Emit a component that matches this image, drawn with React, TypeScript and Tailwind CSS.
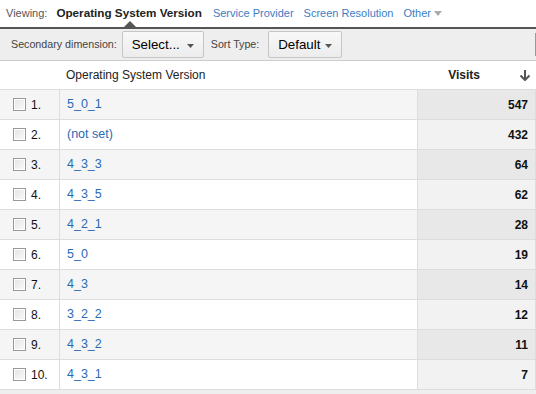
import React from "react";

const rows = [
    { n: 1, name: "5_0_1", visits: 547 },
    { n: 2, name: "(not set)", visits: 432 },
    { n: 3, name: "4_3_3", visits: 64 },
    { n: 4, name: "4_3_5", visits: 62 },
    { n: 5, name: "4_2_1", visits: 28 },
    { n: 6, name: "5_0", visits: 19 },
    { n: 7, name: "4_3", visits: 14 },
    { n: 8, name: "3_2_2", visits: 12 },
    { n: 9, name: "4_3_2", visits: 11 },
    { n: 10, name: "4_3_1", visits: 7 },
];

const Caret = () => (
    <svg width="7" height="4" viewBox="0 0 7 4" className="absolute right-[9px] top-[12px]">
        <path d="M0 0h7L3.5 4z" fill="#555" />
    </svg>
);

const App = () => {
    return (
        <div className="w-[536px] h-[394px] overflow-hidden bg-white font-['Liberation_Sans',Arial,sans-serif]">
            {/* Viewing tabs */}
            <div className="relative h-[27px] flex items-center pl-[6px] text-[11px] pb-[1px]">
                <span className="text-[#555]">Viewing:</span>
                <span className="ml-[9px] font-bold text-[11.7px] text-[#222]">Operating System Version</span>
                <span className="ml-[11px] text-[#3b7dc4]">Service Provider</span>
                <span className="ml-[10px] text-[#3b7dc4]">Screen Resolution</span>
                <span className="ml-[10px] text-[#3b7dc4] flex items-center">
                    Other
                    <svg width="8" height="5" viewBox="0 0 8 5" className="ml-[3px]">
                        <path d="M0 0h8L4 5z" fill="#aaa" />
                    </svg>
                </span>
                <svg width="12" height="6" viewBox="0 0 12 6" className="absolute left-[124px] bottom-0">
                    <path d="M0 6L6 0L12 6z" fill="#555" />
                </svg>
            </div>
            <div className="h-[2px] bg-[#555]" />

            {/* Toolbar */}
            <div className="relative h-[32px] bg-[#eeeeee] border-b border-[#ccc] flex items-center pl-[11px] text-[10.7px] text-[#444]">
                <span>Secondary dimension:</span>
                <button className="relative ml-[5px] h-[27px] w-[82px] flex items-center pl-[9px] rounded-[2px] border border-[#c6c6c6] bg-gradient-to-b from-[#f8f8f8] to-[#ececec] text-[13.3px] text-black">
                    Select...
                    <Caret />
                </button>
                <span className="ml-[7px]">Sort Type:</span>
                <button className="relative ml-[9px] h-[27px] w-[74px] flex items-center pl-[9px] rounded-[2px] border border-[#c6c6c6] bg-gradient-to-b from-[#f8f8f8] to-[#ececec] text-[13.3px] text-black">
                    Default
                    <Caret />
                </button>
                <div className="absolute right-0 top-[4px] h-[23px] w-[1px] bg-[#999]" />
            </div>

            {/* Table */}
            <div className="text-[12px]">
                <div className="h-[29px] flex items-center border-b border-[#ddd] text-[#222]">
                    <div className="w-[60px]" />
                    <div className="pl-[6px] flex-1">Operating System Version</div>
                    <div className="w-[119px] flex items-center justify-end pr-[5px] font-bold">
                        Visits
                        <svg width="12" height="12" viewBox="0 0 12 12" className="ml-[39px]">
                            <path d="M6 1v10M1.5 6.5L6 11l4.5-4.5" stroke="#555" strokeWidth="2" fill="none" />
                        </svg>
                    </div>
                </div>
                {rows.map((r, i) => {
                    const odd = i % 2 === 0;
                    return (
                        <div
                            key={r.n}
                            className={`h-[30px] flex border-b border-[#ddd] ${odd ? "bg-[#f5f5f5]" : "bg-white"}`}
                        >
                            <div className="w-[60px] flex items-center border-r border-[#ddd] pl-[13px]">
                                <span className="w-[13px] h-[13px] border border-[#999] bg-gradient-to-br from-[#e4e4e4] to-[#fafafa] shadow-[inset_0_0_0_1px_#fff]" />
                                <span className="ml-[5px] text-[#111]">{r.n}.</span>
                            </div>
                            <div className="flex-1 flex items-center pl-[7px] text-[12.5px] text-[#2a6ab4]">{r.name}</div>
                            <div
                                className={`w-[119px] flex items-center justify-end pr-[7px] font-bold text-[#111] border-l border-r border-[#ddd] ${odd ? "bg-[#e8e8e8]" : "bg-[#f2f2f2]"}`}
                            >
                                {r.visits}
                            </div>
                        </div>
                    );
                })}
                <div className="h-[4px] bg-[#eee]" />
            </div>
        </div>
    );
};

export default App;
